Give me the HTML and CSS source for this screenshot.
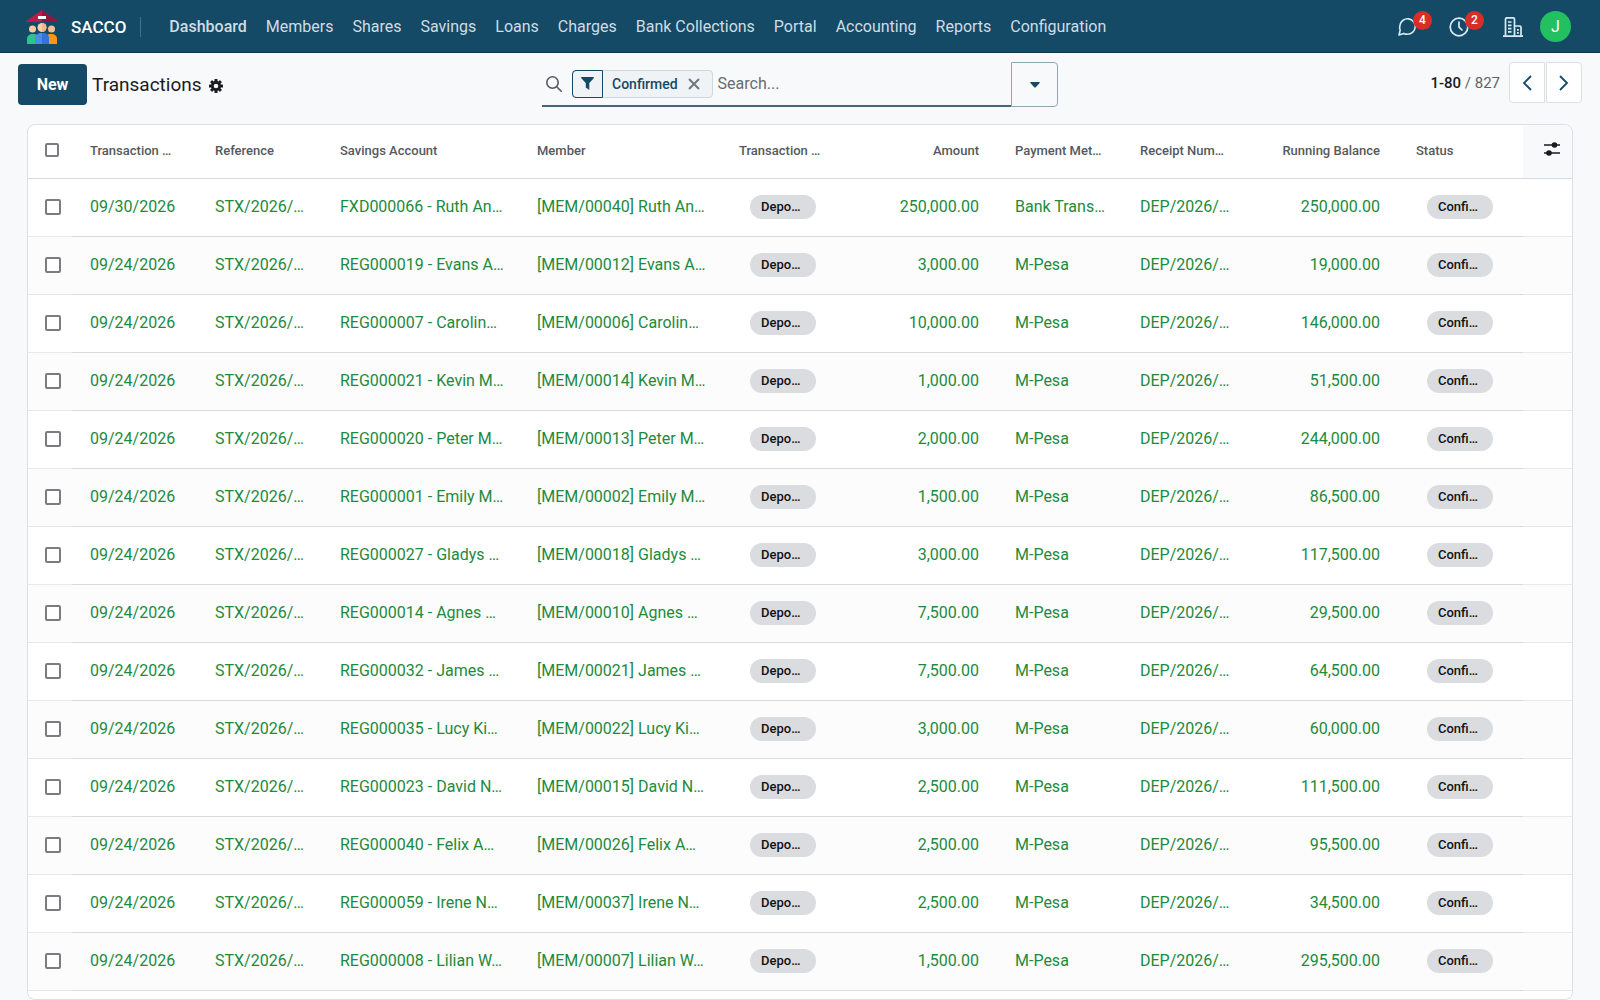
FILE: index.html
```html
<!DOCTYPE html>
<html lang="en">
<head>
<meta charset="utf-8">
<meta name="viewport" content="width=device-width, initial-scale=1">
<title>Transactions - SACCO</title>
<link rel="stylesheet" href="styles.css">
</head>
<body>
<header class="navbar">
  <a class="brand" href="#">
    <svg class="brand-logo" viewBox="0 0 34 34" aria-hidden="true">
      <path d="M17 0 0 12h34z" fill="#c2184b"/>
      <path d="M17 0v12h17z" fill="#8f1640"/>
      <rect x="13" y="6" width="8" height="3" fill="#fff"/>
      <path d="M2 34v-5c0-3 2-5 6-5s6 2 6 5v5z" fill="#2bc48a"/>
      <path d="M20 34v-5c0-3 2-5 6-5s6 2 6 5v5z" fill="#f59a0c"/>
      <circle cx="7.500" cy="19" r="3.500" fill="#f7cba4"/>
      <circle cx="26.500" cy="19" r="3.500" fill="#f3bd92"/>
      <path d="M10 34v-6c0-3 3-5 7-5s7 2 7 5v6z" fill="#4a8df0"/>
      <path d="M17 23c4 0 7 2 7 5v6h-7z" fill="#3672d8"/>
      <circle cx="17" cy="17.500" r="4.500" fill="#f9d0ab"/>
      <path d="M17 13a4.500 4.500 0 0 1 0 9z" fill="#f0b88b"/>
    </svg>
    <span>SACCO</span>
  </a>
  <nav class="menu">
    <a class="active" href="#">Dashboard</a>
    <a href="#">Members</a>
    <a href="#">Shares</a>
    <a href="#">Savings</a>
    <a href="#">Loans</a>
    <a href="#">Charges</a>
    <a href="#">Bank Collections</a>
    <a href="#">Portal</a>
    <a href="#">Accounting</a>
    <a href="#">Reports</a>
    <a href="#">Configuration</a>
  </nav>
  <div class="systray">
    <button class="tray-btn" type="button" aria-label="Messages">
      <svg viewBox="0 0 20 20" width="20" height="20" fill="none" stroke="currentColor" stroke-width="1.600" stroke-linejoin="round"><path d="M2 18l1.200-5A7.500 7.500 0 0 1 3 8a7.700 7.700 0 1 1 7.500 9.200c-1.400 0-2.600-.3-3.700-.8z"/></svg>
      <span class="badge">4</span>
    </button>
    <button class="tray-btn" type="button" aria-label="Activities">
      <svg viewBox="0 0 20 20" width="20" height="20" fill="none" stroke="currentColor" stroke-width="1.700" stroke-linecap="round"><circle cx="10" cy="10" r="8.800"/><path d="M10 5v5.200l3 2.800"/></svg>
      <span class="badge">2</span>
    </button>
    <button class="tray-btn" type="button" aria-label="Companies">
      <svg viewBox="0 0 20 20" width="20" height="20" fill="none" stroke="currentColor" stroke-width="1.700"><path d="M0 19.200h20M2.500 19V2.200q0-1.400 1.400-1.400h6.200q1.400 0 1.400 1.400V19M11.500 9h5.200q1.300 0 1.300 1.300V19M5 5h3.500M5 8.300h3.500M5 11.600h3.500M5 14.900h3.500M14 12.800h1.800M14 15.800h1.800"/></svg>
    </button>
    <button class="avatar" type="button" aria-label="User menu">J</button>
  </div>
</header>

<section class="control-panel">
  <div class="crumbs">
    <button class="btn-new" type="button">New</button>
    <h1>Transactions</h1>
    <button class="gear" type="button" aria-label="Actions">
      <svg viewBox="0 0 14 14" width="14" height="14"><g fill="currentColor"><circle cx="7" cy="7" r="5"/><g id="teeth"><rect x="5.500" y="0" width="3" height="14" rx=".6"/><rect x="0" y="5.500" width="14" height="3" rx=".6"/></g><use href="#teeth" transform="rotate(45 7 7)"/></g><circle cx="7" cy="7" r="2.300" fill="#f7f9fb"/></svg>
    </button>
  </div>
  <div class="search" role="search">
    <div class="search-field">
      <svg class="lens" viewBox="0 0 16 16" width="16" height="16" fill="none" stroke="currentColor" stroke-width="1.600" stroke-linecap="round"><circle cx="6.500" cy="6.500" r="5.700"/><path d="M10.700 10.700l4.500 4.500"/></svg>
      <div class="facet">
        <span class="facet-icon"><svg viewBox="0 0 13 13" width="13" height="13"><path d="M.5 0h12q.7.400.2 1.200L8.300 6v7L4.800 10.500V6L.3 1.200Q-.2.400.5 0z" fill="currentColor"/></svg></span>
        <span class="facet-label">Confirmed</span>
        <button class="facet-remove" type="button" aria-label="Remove"><svg viewBox="0 0 12 12" width="12" height="12" stroke="currentColor" stroke-width="2"><path d="M1 1l10 10M11 1L1 11"/></svg></button>
      </div>
      <input class="search-input" type="text" placeholder="Search..." aria-label="Search">
    </div>
    <button class="search-toggle" type="button" aria-label="Search options"><svg viewBox="0 0 10 6" width="10" height="6"><path d="M.6 0h8.800q.6.300.2.900L5.500 5.600H4.500L.4.900Q0 .3.600 0z" fill="currentColor"/></svg></button>
  </div>
  <div class="pager">
    <span><strong>1-80</strong> / 827</span>
    <div class="pager-btns">
      <button type="button" aria-label="Previous"><svg viewBox="0 0 10 16" width="10" height="16" fill="none" stroke="currentColor" stroke-width="1.800"><path d="M9 1L2 8l7 7"/></svg></button>
      <button type="button" aria-label="Next"><svg viewBox="0 0 10 16" width="10" height="16" fill="none" stroke="currentColor" stroke-width="1.800"><path d="M1 1l7 7-7 7"/></svg></button>
    </div>
  </div>
</section>

<main class="card">
<table class="list">
<colgroup><col class="c-check"><col class="c-std"><col class="c-std"><col class="c-account"><col class="c-member"><col class="c-std"><col class="c-num"><col class="c-std"><col class="c-std"><col class="c-num"><col class="c-std"><col class="c-opt"></colgroup>
<thead>
<tr><th class="check"><input type="checkbox" aria-label="Select all"></th><th>Transaction …</th><th>Reference</th><th>Savings Account</th><th>Member</th><th>Transaction …</th><th class="num">Amount</th><th>Payment Met…</th><th>Receipt Num…</th><th class="num">Running Balance</th><th>Status</th><th class="opt"><button type="button" aria-label="Columns"><svg viewBox="0 0 16 14" width="16" height="14"><path d="M0 3h16M0 11h16" stroke="currentColor" stroke-width="1.600"/><circle cx="10.500" cy="3" r="2.800" fill="currentColor"/><circle cx="5" cy="11" r="2.800" fill="currentColor"/></svg></button></th></tr>
</thead>
<tbody>
<tr><td class="check"><input type="checkbox" aria-label="Select row"></td><td>09/30/2026</td><td>STX/2026/…</td><td>FXD000066 - Ruth An…</td><td>[MEM/00040] Ruth An…</td><td><span class="pill">Depo…</span></td><td class="num">250,000.00</td><td>Bank Trans…</td><td>DEP/2026/…</td><td class="num">250,000.00</td><td><span class="pill">Confi…</span></td><td class="opt"></td></tr>
<tr><td class="check"><input type="checkbox" aria-label="Select row"></td><td>09/24/2026</td><td>STX/2026/…</td><td>REG000019 - Evans A…</td><td>[MEM/00012] Evans A…</td><td><span class="pill">Depo…</span></td><td class="num">3,000.00</td><td>M-Pesa</td><td>DEP/2026/…</td><td class="num">19,000.00</td><td><span class="pill">Confi…</span></td><td class="opt"></td></tr>
<tr><td class="check"><input type="checkbox" aria-label="Select row"></td><td>09/24/2026</td><td>STX/2026/…</td><td>REG000007 - Carolin…</td><td>[MEM/00006] Carolin…</td><td><span class="pill">Depo…</span></td><td class="num">10,000.00</td><td>M-Pesa</td><td>DEP/2026/…</td><td class="num">146,000.00</td><td><span class="pill">Confi…</span></td><td class="opt"></td></tr>
<tr><td class="check"><input type="checkbox" aria-label="Select row"></td><td>09/24/2026</td><td>STX/2026/…</td><td>REG000021 - Kevin M…</td><td>[MEM/00014] Kevin M…</td><td><span class="pill">Depo…</span></td><td class="num">1,000.00</td><td>M-Pesa</td><td>DEP/2026/…</td><td class="num">51,500.00</td><td><span class="pill">Confi…</span></td><td class="opt"></td></tr>
<tr><td class="check"><input type="checkbox" aria-label="Select row"></td><td>09/24/2026</td><td>STX/2026/…</td><td>REG000020 - Peter M…</td><td>[MEM/00013] Peter M…</td><td><span class="pill">Depo…</span></td><td class="num">2,000.00</td><td>M-Pesa</td><td>DEP/2026/…</td><td class="num">244,000.00</td><td><span class="pill">Confi…</span></td><td class="opt"></td></tr>
<tr><td class="check"><input type="checkbox" aria-label="Select row"></td><td>09/24/2026</td><td>STX/2026/…</td><td>REG000001 - Emily M…</td><td>[MEM/00002] Emily M…</td><td><span class="pill">Depo…</span></td><td class="num">1,500.00</td><td>M-Pesa</td><td>DEP/2026/…</td><td class="num">86,500.00</td><td><span class="pill">Confi…</span></td><td class="opt"></td></tr>
<tr><td class="check"><input type="checkbox" aria-label="Select row"></td><td>09/24/2026</td><td>STX/2026/…</td><td>REG000027 - Gladys …</td><td>[MEM/00018] Gladys …</td><td><span class="pill">Depo…</span></td><td class="num">3,000.00</td><td>M-Pesa</td><td>DEP/2026/…</td><td class="num">117,500.00</td><td><span class="pill">Confi…</span></td><td class="opt"></td></tr>
<tr><td class="check"><input type="checkbox" aria-label="Select row"></td><td>09/24/2026</td><td>STX/2026/…</td><td>REG000014 - Agnes …</td><td>[MEM/00010] Agnes …</td><td><span class="pill">Depo…</span></td><td class="num">7,500.00</td><td>M-Pesa</td><td>DEP/2026/…</td><td class="num">29,500.00</td><td><span class="pill">Confi…</span></td><td class="opt"></td></tr>
<tr><td class="check"><input type="checkbox" aria-label="Select row"></td><td>09/24/2026</td><td>STX/2026/…</td><td>REG000032 - James …</td><td>[MEM/00021] James …</td><td><span class="pill">Depo…</span></td><td class="num">7,500.00</td><td>M-Pesa</td><td>DEP/2026/…</td><td class="num">64,500.00</td><td><span class="pill">Confi…</span></td><td class="opt"></td></tr>
<tr><td class="check"><input type="checkbox" aria-label="Select row"></td><td>09/24/2026</td><td>STX/2026/…</td><td>REG000035 - Lucy Ki…</td><td>[MEM/00022] Lucy Ki…</td><td><span class="pill">Depo…</span></td><td class="num">3,000.00</td><td>M-Pesa</td><td>DEP/2026/…</td><td class="num">60,000.00</td><td><span class="pill">Confi…</span></td><td class="opt"></td></tr>
<tr><td class="check"><input type="checkbox" aria-label="Select row"></td><td>09/24/2026</td><td>STX/2026/…</td><td>REG000023 - David N…</td><td>[MEM/00015] David N…</td><td><span class="pill">Depo…</span></td><td class="num">2,500.00</td><td>M-Pesa</td><td>DEP/2026/…</td><td class="num">111,500.00</td><td><span class="pill">Confi…</span></td><td class="opt"></td></tr>
<tr><td class="check"><input type="checkbox" aria-label="Select row"></td><td>09/24/2026</td><td>STX/2026/…</td><td>REG000040 - Felix A…</td><td>[MEM/00026] Felix A…</td><td><span class="pill">Depo…</span></td><td class="num">2,500.00</td><td>M-Pesa</td><td>DEP/2026/…</td><td class="num">95,500.00</td><td><span class="pill">Confi…</span></td><td class="opt"></td></tr>
<tr><td class="check"><input type="checkbox" aria-label="Select row"></td><td>09/24/2026</td><td>STX/2026/…</td><td>REG000059 - Irene N…</td><td>[MEM/00037] Irene N…</td><td><span class="pill">Depo…</span></td><td class="num">2,500.00</td><td>M-Pesa</td><td>DEP/2026/…</td><td class="num">34,500.00</td><td><span class="pill">Confi…</span></td><td class="opt"></td></tr>
<tr><td class="check"><input type="checkbox" aria-label="Select row"></td><td>09/24/2026</td><td>STX/2026/…</td><td>REG000008 - Lilian W…</td><td>[MEM/00007] Lilian W…</td><td><span class="pill">Depo…</span></td><td class="num">1,500.00</td><td>M-Pesa</td><td>DEP/2026/…</td><td class="num">295,500.00</td><td><span class="pill">Confi…</span></td><td class="opt"></td></tr>
</tbody>
</table>
</main>
</body>
</html>
```
FILE: styles.css
```css
* { box-sizing: border-box; }

body {
  margin: 0;
  background: #f7f9fb;
  color: #1b1b1f;
  font: 16px/24px Roboto, sans-serif;
}

button, input { font: inherit; }
button {
  padding: 0;
  border: 0;
  background: none;
  color: inherit;
  cursor: pointer;
}
a { color: inherit; text-decoration: none; }
svg { display: block; }

/* Top bar */
.navbar {
  display: flex;
  align-items: center;
  height: 53px;
  padding: 1px 29px 0 25px;
  background: #144a66;
  border-bottom: 1px solid #0f3a52;
  color: #d0dce3;
}
.brand {
  display: flex;
  align-items: center;
  gap: 12px;
  padding-right: 14px;
  border-right: 1px solid #43708a;
  height: 20px;
  color: #fff;
  font-size: 17px;
  font-weight: 500;
}
.brand-logo { width: 34px; height: 34px; }
.menu { display: flex; gap: 19px; padding-left: 28px; white-space: nowrap; }
.menu .active { font-weight: 500; }
.systray {
  display: flex;
  align-items: center;
  margin-left: auto;
  color: #d7eaf5;
}
.tray-btn { position: relative; width: 20px; margin-right: 32px; }
.tray-btn:nth-child(3) { margin-right: 17px; }
.tray-btn:nth-child(2) { margin-right: 34px; }
.badge {
  position: absolute;
  top: -6px;
  left: 16px;
  width: 19px;
  height: 19px;
  border-radius: 10px;
  background: #d92d27;
  color: #fff;
  font-size: 12px;
  font-weight: 500;
  line-height: 19px;
  text-align: center;
}
.avatar {
  width: 31px;
  height: 31px;
  border-radius: 50%;
  background: #22c05f;
  color: #fff;
}

/* Control panel */
.control-panel {
  display: grid;
  grid-template-columns: 1fr 516px 1fr;
  align-items: start;
  padding: 9px 18px 17px;
}
.crumbs { display: flex; align-items: center; gap: 5px; padding-top: 2px; }
.btn-new {
  width: 69px;
  height: 41px;
  border-radius: 4px;
  background: #144a66;
  color: #fff;
  font-weight: 700;
}
h1 { margin: 0; font-size: 19px; font-weight: 400; line-height: 24px; }
.gear { padding: 3px 0 0 2px; }
.search { display: flex; height: 45px; }
.search-field {
  display: flex;
  flex: 1;
  align-items: center;
  min-width: 0;
  padding-left: 4px;
  border-bottom: 2px solid #46667a;
}
.lens { margin-right: 10px; color: #55595e; }
.facet {
  display: flex;
  align-items: center;
  height: 28px;
  border: 1px solid #cdd9de;
  border-radius: 4px;
  background: #f0f3f5;
  color: #144a66;
  font-size: 14px;
  font-weight: 500;
}
.facet-icon {
  display: grid;
  place-items: center;
  width: 31px;
  height: 28px;
  margin: -1px 0 -1px -1px;
  border: 1px solid #144a66;
  border-radius: 4px 0 0 4px;
}
.facet-label { padding: 0 10px 0 9px; }
.facet-remove { margin-right: 12px; color: #6f767c; }
.search-input {
  flex: 1;
  min-width: 0;
  padding: 0 5px;
  border: 0;
  outline: 0;
  background: none;
}
.search-input::placeholder { color: #686c71; opacity: 1; }
.search-toggle {
  display: grid;
  place-items: center;
  width: 47px;
  border: 1px solid #8ca7b6;
  border-radius: 0 4px 4px 0;
  color: #144a66;
}
.pager {
  display: flex;
  justify-content: flex-end;
  align-items: center;
  gap: 9px;
  color: #5f6368;
  font-size: 15px;
}
.pager strong { color: #1b1b1f; font-weight: 500; }
.pager-btns { display: flex; gap: 1px; }
.pager-btns button {
  display: grid;
  place-items: center;
  width: 36px;
  height: 41px;
  border: 1px solid #dcdfe3;
  border-radius: 4px 0 0 4px;
  background: #fff;
  color: #144a66;
}
.pager-btns button + button { border-radius: 0 4px 4px 0; }

/* List */
.card {
  margin: 0 27px;
  padding-bottom: 8px;
  border: 1px solid #dcdfe3;
  border-radius: 8px;
  background: #fff;
  overflow: hidden;
}
.list {
  width: 100%;
  table-layout: fixed;
  border-collapse: separate;
  border-spacing: 0;
  white-space: nowrap;
}
.c-check { width: 44px; }
.c-std { width: 125px; }
.c-account { width: 197px; }
.c-member { width: 202px; }
.c-num { width: 151px; }
.c-opt { width: 49px; }
th, td { padding: 0 18px; border-bottom: 1px solid #d9dadd; text-align: left; }
th {
  height: 54px;
  padding-bottom: 2px;
  color: #55595e;
  font-size: 13px;
  font-weight: 500;
}
td { height: 58px; padding-bottom: 1px; color: #1e8a3c; }
tbody tr:nth-child(even) { background: #fcfcfc; }
.num { text-align: right; }
.check { padding-left: 17px; padding-right: 0; }
th.check { padding-bottom: 4px; }
td.check, td.opt { border-bottom-color: #e8e9eb; }
.check input {
  display: block;
  appearance: none;
  width: 16px;
  height: 16px;
  margin: 0;
  border: 2px solid #7b7c83;
  border-radius: 2px;
  background: #fff;
}
th.check input { width: 14px; height: 14px; }
th.opt { padding: 0 12px 0 21px; background: #f7f9fb; color: #1b1b1f; }
.pill {
  display: block;
  width: 66px;
  height: 24px;
  margin-left: 11px;
  padding: 0 11px;
  border-radius: 12px;
  background: #dbdce0;
  color: #111;
  font-size: 13px;
  font-weight: 500;
  line-height: 24px;
}
```
